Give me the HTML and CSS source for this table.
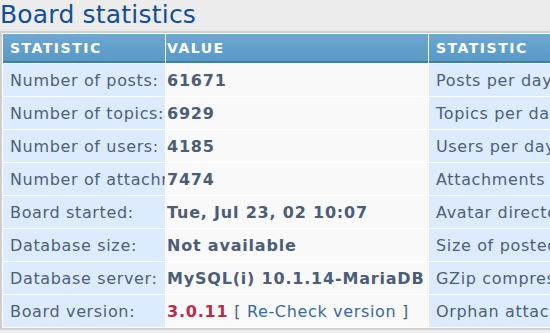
FILE: index.html
```html
<!DOCTYPE html>
<html>
<head>
<meta charset="utf-8">
<link rel="stylesheet" href="styles.css">
</head>
<body>
<h1 class="title">Board statistics</h1>
<table class="stats">
  <colgroup>
    <col class="c1"><col class="c2"><col class="c3"><col class="c4">
  </colgroup>
  <thead>
    <tr>
      <th class="lbl">Statistic</th>
      <th class="val">Value</th>
      <th class="lbl">Statistic</th>
      <th class="val">Value</th>
    </tr>
  </thead>
  <tbody>
    <tr><td class="lbl">Number of posts:</td><td class="val"><b>61671</b></td><td class="lbl">Posts per day:</td><td class="val"><b>8.19</b></td></tr>
    <tr><td class="lbl">Number of topics:</td><td class="val"><b>6929</b></td><td class="lbl">Topics per day:</td><td class="val"><b>0.92</b></td></tr>
    <tr><td class="lbl">Number of users:</td><td class="val"><b>4185</b></td><td class="lbl">Users per day:</td><td class="val"><b>0.56</b></td></tr>
    <tr><td class="lbl">Number of attachments:</td><td class="val"><b>7474</b></td><td class="lbl">Attachments per day:</td><td class="val"><b>0.99</b></td></tr>
    <tr><td class="lbl">Board started:</td><td class="val"><b>Tue, Jul 23, 02 10:07</b></td><td class="lbl">Avatar directory size:</td><td class="val"><b>1.2 MiB</b></td></tr>
    <tr><td class="lbl">Database size:</td><td class="val"><b>Not available</b></td><td class="lbl">Size of posted attachments:</td><td class="val"><b>540 MiB</b></td></tr>
    <tr><td class="lbl">Database server:</td><td class="val"><b>MySQL(i) 10.1.14-MariaDB</b></td><td class="lbl">GZip compression:</td><td class="val"><b>Off</b></td></tr>
    <tr><td class="lbl">Board version:</td><td class="val"><b class="ver">3.0.11</b> <span class="br">[</span> <a class="link" href="#">Re-Check version</a> <span class="br">]</span></td><td class="lbl">Orphan attachments:</td><td class="val"><b>0</b></td></tr>
  </tbody>
</table>
</body>
</html>
```

FILE: styles.css
```css
html, body {
  margin: 0;
  padding: 0;
  background: #ececec;
  overflow: hidden;
}
body {
  font-family: "DejaVu Sans", Verdana, sans-serif;
  color: #4f6079;
}
.title {
  margin: 0;
  height: 31px;
  font-size: 25px;
  line-height: 30px;
  letter-spacing: 0.2px;
  font-weight: normal;
  color: #115098;
  white-space: nowrap;
}
.stats {
  table-layout: fixed;
  width: 800px;
  border-collapse: separate;
  border-spacing: 1px;
  background: #ffffff;
  border-top: 2px solid #cfcfcf;
  border-left: 2px solid #cfcfcf;
  border-bottom: 2px solid #cfcfcf;
  margin: 0;
}
.c1 { width: 162px; }
.c2 { width: 262px; }
.c3 { width: 200px; }
.c4 { width: 170px; }
.stats th {
  height: 27px;
  padding: 0;
  text-align: left;
  text-transform: uppercase;
  font-size: 14px;
  font-weight: bold;
  letter-spacing: 1.5px;
  color: #ffffff;
  background: linear-gradient(#6ba8d2, #5a98c6);
  border-bottom: 2px solid #3f7ea8;
  white-space: nowrap;
  overflow: hidden;
}
.stats th.lbl { padding-left: 7px; }
.stats th.val { padding-left: 1px; }
.stats td {
  height: 32px;
  padding: 0;
  font-size: 16px;
  letter-spacing: 0.65px;
  white-space: nowrap;
  overflow: hidden;
}
.stats td.lbl {
  background: #dcebfe;
  padding-left: 7px;
}
.stats td.val {
  background: #f9f9f9;
  padding-left: 1px;
}
.stats td b {
  font-weight: bold;
  letter-spacing: 0.8px;
  color: #4c5d77;
}
.stats td b.ver {
  color: #bc2a4d;
}
.br {
  color: #4f6079;
}
.link {
  color: #366aa0;
  text-decoration: none;
}
```
